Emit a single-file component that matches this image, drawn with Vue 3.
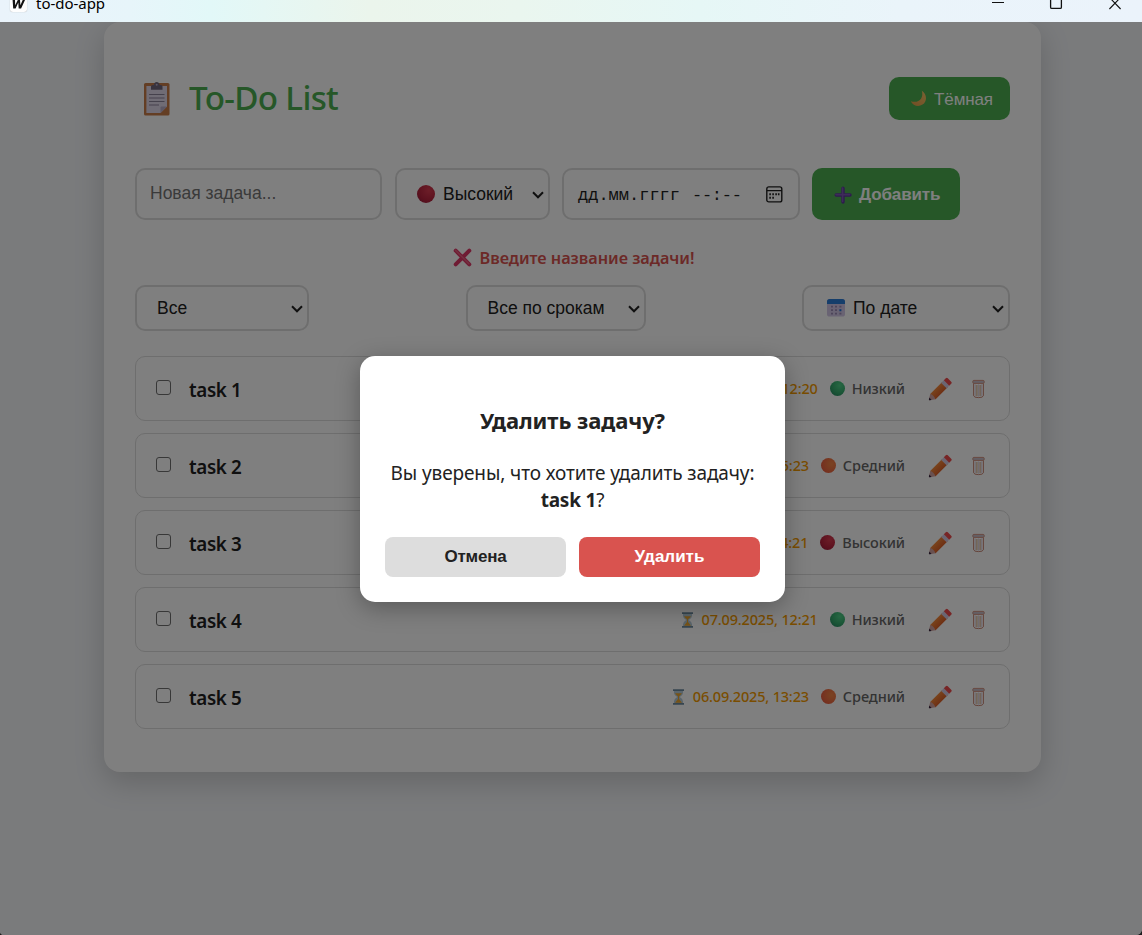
<script setup>
const tasks = [
  { id: 1, name: 'task 1', due: '07.09.2025, 12:20', level: 'low', label: 'Низкий' },
  { id: 2, name: 'task 2', due: '06.09.2025, 15:23', level: 'mid', label: 'Средний' },
  { id: 3, name: 'task 3', due: '05.09.2025, 14:21', level: 'high', label: 'Высокий' },
  { id: 4, name: 'task 4', due: '07.09.2025, 12:21', level: 'low', label: 'Низкий' },
  { id: 5, name: 'task 5', due: '06.09.2025, 13:23', level: 'mid', label: 'Средний' },
]
</script>

<template>
  <div class="window">
    <header class="titlebar">
      <span class="logo">
        <svg width="17" height="12" viewBox="0 0 17 12">
          <path d="M2.6 0 L3.2 8.5 L5.6 8.5 L8.3 2.4 L8.7 8.5 L11.1 8.5 L15 0 L12.7 0 L10.4 5.2 L10 0 L7.8 0 L5.2 5.2 L5 0 Z" fill="#111" />
        </svg>
      </span>
      <span class="app-name">to-do-app</span>
      <span class="controls">
        <svg width="160" height="22" viewBox="0 0 160 22" fill="none" stroke="#111" stroke-width="1.3">
          <path d="M10 2.5H22" stroke-width="1" />
          <path d="M68.6 -4V7.2Q68.6 8.4 69.8 8.4H78.2Q79.4 8.4 79.4 7.2V-4" />
          <path d="M127 -3L138.6 9M139 -3L127.4 9" stroke-width="1.1" />
        </svg>
      </span>
    </header>

    <main class="stage">
      <section class="card">
        <div class="head">
          <div class="brand">
            <svg class="clip" width="28" height="36" viewBox="0 0 28 36">
              <rect x="1" y="2" width="25.5" height="32.5" rx="1.6" fill="#c97d48" />
              <path d="M3.4 5H24V25.5L17.5 32H3.4Z" fill="#e0d9ea" />
              <path d="M17.5 32V26.5Q17.5 25.5 18.5 25.5H24Z" fill="#b9aec9" />
              <path d="M8 8.8V5.5Q8 4 9.5 4H10.7Q11.3 1 13.7 1T16.8 4H18Q19.5 4 19.5 5.5V8.8Z" fill="#71667c" />
              <circle cx="13.7" cy="3.7" r="1" fill="#b9aec9" />
              <path d="M6 13.5H21.5M6 17H21.5M6 20.5H21.5M6 24H16" stroke="#8b8299" stroke-width="1.2" />
            </svg>
            <h1>To-Do List</h1>
          </div>
          <button class="theme">
            <svg width="17" height="17" viewBox="0 0 17 17">
              <defs>
                <linearGradient id="moon" x1="1" y1="0" x2="0" y2="1">
                  <stop offset="0" stop-color="#f6c566" /><stop offset="1" stop-color="#e69b48" />
                </linearGradient>
              </defs>
              <path d="M11.8 .8C17 4 17.5 11.5 12.5 14.6C8.5 17.2 3 16 .8 11.2C5 12.6 9 11.8 11 8.8C12.5 6.5 12.6 3.5 11.8 .8Z" fill="url(#moon)" />
            </svg>
            <span>Тёмная</span>
          </button>
        </div>

        <div class="form">
          <div class="field text"><span>Новая задача...</span></div>
          <div class="field priority">
            <span class="ball high big"></span>
            <span class="value">Высокий</span>
            <svg class="chev" width="12" height="8" viewBox="0 0 12 8"><path d="M1 1.3L6 6.3L11 1.3" /></svg>
          </div>
          <div class="field date">
            <span class="mono">дд.мм.гггг</span><span class="mono time">--:--</span>
            <svg class="picker" width="17" height="17" viewBox="0 0 17 17">
              <rect x=".8" y=".9" width="15" height="15" rx="2" fill="none" stroke="#202020" stroke-width="1.4" />
              <path d="M1 4.7H16" stroke="#202020" stroke-width="1.2" />
              <path d="M6.6 8h1.6M9.6 8h1.6M12.2 8h1.6M3.6 11.5h1.6M6.6 11.5h1.6M3.6 8h1.6" stroke="#202020" stroke-width="2" transform="translate(-.3 .2)" />
            </svg>
          </div>
          <button class="add">
            <svg width="18" height="18" viewBox="0 0 18 18">
              <path d="M9 2.2V16M2.2 9H16" stroke="#5a3698" stroke-width="3.4" stroke-linecap="round" />
              <path d="M8.6 2V15.5M2 8.6H15.6" stroke="#7c57b5" stroke-width="1.6" stroke-linecap="round" />
            </svg>
            <span>Добавить</span>
          </button>
        </div>

        <div class="error">
          <svg width="19" height="19" viewBox="0 0 19 19">
            <path d="M2.7 2.7L16.3 16.3M16.3 2.7L2.7 16.3" stroke="#df3868" stroke-width="4" stroke-linecap="round" />
            <path d="M2.5 2.3L15.9 15.7" stroke="#e96383" stroke-width="1.4" stroke-linecap="round" />
          </svg>
          <span>Введите название задачи!</span>
        </div>

        <div class="filters">
          <div class="field f-state"><span class="value">Все</span>
            <svg class="chev" width="12" height="8" viewBox="0 0 12 8"><path d="M1 1.3L6 6.3L11 1.3" /></svg>
          </div>
          <div class="field f-due"><span class="value">Все по срокам</span>
            <svg class="chev" width="12" height="8" viewBox="0 0 12 8"><path d="M1 1.3L6 6.3L11 1.3" /></svg>
          </div>
          <div class="field f-sort">
            <svg class="cal" width="18" height="18" viewBox="0 0 18 18">
              <rect width="18" height="17.5" rx="2.6" fill="#d3c6e6" />
              <path d="M0 5V2.6Q0 0 2.6 0H15.4Q18 0 18 2.6V5Z" fill="#2a7cd6" />
              <path d="M4 7.7h2M8 7.7h2M12.4 7.7h2M4 11.2h2M8 11.2h2M4 14.6h2M8 14.6h2M12.4 14.6h2" stroke="#9a8bb5" stroke-width="1.8" />
              <path d="M12.4 11.2h2" stroke="#1d72d8" stroke-width="2" />
            </svg>
            <span class="value">По дате</span>
            <svg class="chev" width="12" height="8" viewBox="0 0 12 8"><path d="M1 1.3L6 6.3L11 1.3" /></svg>
          </div>
        </div>

        <ul class="tasks">
          <li v-for="t in tasks" :key="t.id" class="task">
            <span class="check"></span>
            <span class="name">{{ t.name }}</span>
            <span class="due">
              <svg width="13" height="16" viewBox="0 0 13 16">
                <path d="M2 1.5V4Q2 6 5.2 8Q2 10 2 12.2V14.5H11V12.2Q11 10 7.8 8Q11 6 11 4V1.5Z" fill="#b5cbd8" />
                <path d="M3 4.2H10Q9 6 6.5 7.8Q4 6 3 4.2ZM6.5 9.2L10 13.8H3Z" fill="#eda72f" />
                <path d="M6.5 7V12" stroke="#eda72f" />
                <path d="M1 1.2H12M1 14.8H12" stroke="#6d8b9e" stroke-width="1.7" />
              </svg>
              <span>{{ t.due }}</span>
            </span>
            <span class="level"><i class="ball" :class="t.level"></i><span>{{ t.label }}</span></span>
            <svg class="pencil" width="24" height="24" viewBox="0 0 24 24">
              <defs>
                <linearGradient id="wood" x1="0" y1="0" x2="1" y2="1">
                  <stop offset=".3" stop-color="#f58d3c" /><stop offset=".75" stop-color="#d65322" />
                </linearGradient>
              </defs>
              <path d="M2.2 16.9L14.2 4.9L19.6 10.3L7.6 22.3Q4.5 21.5 2.2 16.9Z" fill="url(#wood)" />
              <path d="M2.2 16.9Q5.5 17.6 7.6 22.3L1.6 23.3Q.7 23.4 .9 22.6Z" fill="#d3a3a0" />
              <path d="M1.4 20.6L3.5 22.9L1.6 23.3Q.7 23.4 .9 22.6Z" fill="#35243f" />
              <path d="M13.2 5.9L15.8 3.3L21.2 8.7L18.6 11.3Z" fill="#d5cbe4" />
              <path d="M15.8 3.3L17.8 1.3Q18.8 .3 19.8 1.3L23.2 4.7Q24.2 5.7 23.2 6.7L21.2 8.7Z" fill="#ee4b4c" />
            </svg>
            <svg class="bin" width="13" height="20" viewBox="0 0 13 20" fill="none">
              <path d="M1.6 4.5V16.8Q2 18.6 6.5 18.6T11.4 16.8V4.5" stroke="#c98573" stroke-width="1" />
              <path d="M3.3 5.5V17M6.5 5.5V17.6M9.7 5.5V17" stroke="#e0d6e4" stroke-width="1" />
              <path d="M4.9 6V17M8.1 6V17" stroke="#c7905c" stroke-width=".8" />
              <rect x=".8" y="1.4" width="11.4" height="3" rx="1" fill="#c9bfc9" stroke="#cf8a76" stroke-width=".9" />
            </svg>
          </li>
        </ul>
      </section>

      <div class="overlay">
        <div class="modal">
          <h2>Удалить задачу?</h2>
          <p>Вы уверены, что хотите удалить задачу:<br /><b>task 1</b>?</p>
          <div class="actions">
            <button class="cancel">Отмена</button>
            <button class="remove">Удалить</button>
          </div>
        </div>
      </div>
    </main>
  </div>
</template>

<style>
html, body { margin: 0; overflow: hidden; background: #1c1c1c; }
</style>

<style scoped>
* { box-sizing: border-box; }
.window { width: 1142px; height: 935px; overflow: hidden; font-family: "Noto Sans", "Open Sans", sans-serif; color: #222; }
.titlebar { height: 22px; display: flex; align-items: flex-start; background: linear-gradient(90deg, #eaf3fb 0, #e7f5fa 130px, #e2f8f8 210px, #ebf5ec 370px, #eaf6ef 520px, #e6f7f6 700px, #eaf4fa 900px, #ebf3fb 100%); }
.logo { width: 17px; height: 12px; margin-left: 10px; background: #fdfdfd; border-radius: 0 0 3px 3px; box-shadow: 0 0 1px #999; }
.logo svg { display: block; }
.app-name { margin: -7px 0 0 9px; font-size: 15px; line-height: 20px; letter-spacing: -.03px; color: #000; }
.controls { margin-left: auto; width: 160px; height: 22px; }
.controls svg { display: block; }

.stage { position: relative; height: 913px; padding-left: 104px; background: #f4f6f9; border-radius: 0 0 6px 4px; overflow: hidden; }
.card { width: 937px; height: 750px; padding: 55px 31px 0; background: #fff; border-radius: 16px; box-shadow: 0 10px 30px rgba(0, 0, 0, .18); }
.head { display: flex; justify-content: space-between; align-items: center; height: 43px; }
.brand { display: flex; align-items: center; }
.clip { margin-left: 8px; margin-right: 18px; }
h1 { margin: 0 0 2px; font-size: 33.2px; line-height: 40px; font-weight: 500; letter-spacing: -.68px; color: #4caf50; }
button { border: 0; font-family: "Liberation Sans", Arial, sans-serif; color: #fff; padding: 0; }
.theme { display: flex; align-items: center; width: 121px; height: 43px; padding: 0 0 0 21px; border-radius: 10px; background: #4caf50; font-size: 17px; letter-spacing: -.1px; }
.theme svg { margin-right: 7px; }
.theme span { padding-top: 2px; }

.form { display: flex; margin-top: 48px; height: 52px; }
.field { position: relative; display: flex; align-items: center; border: 2px solid #ddd; border-radius: 10px; background: #fff; font-family: "Liberation Sans", Arial, sans-serif; font-size: 17.5px; color: #202020; white-space: nowrap; }
.text { width: 247px; padding: 0 0 2px 13px; margin-right: 13px; color: #757575; }
.priority { width: 155px; padding-left: 20px; margin-right: 12px; }
.priority .ball { margin-right: 8px; }
.chev { margin: 0 4px 0 auto; fill: none; stroke: #202020; stroke-width: 2; position: relative; top: 1px; }
.date { width: 238px; padding-left: 14px; margin-right: 12px; }
.mono { font-family: "Liberation Mono", monospace; font-size: 17px; padding-top: 3px; }
.time { margin-left: 12px; letter-spacing: -.3px; }
.picker { margin: 0 15px 0 auto; }
.add { display: flex; align-items: center; width: 148px; height: 52px; padding: 1px 0 0 22px; border-radius: 10px; background: #4caf50; font-size: 17px; font-weight: 700; letter-spacing: -.12px; }
.add svg { margin-right: 7px; }

.error { display: flex; align-items: center; justify-content: center; height: 22px; margin: 27px 0 16px; padding-left: 2px; font-size: 16.3px; font-weight: 600; line-height: 22px; letter-spacing: -.04px; color: #d9534f; }
.error svg { margin-right: 8px; margin-top: -1px; }
.error span { margin-top: -1px; }

.filters { display: flex; justify-content: space-between; height: 46px; }
.f-state { width: 174px; padding-left: 20px; }
.f-due { width: 180px; padding-left: 20px; }
.f-sort { width: 208px; padding-left: 23px; }
.f-sort .cal { margin-right: 8px; }

.tasks { list-style: none; margin: 25px 0 0; padding: 0; display: flex; flex-direction: column; gap: 12px; }
.task { display: flex; align-items: center; height: 65px; padding: 0 24px 0 20px; border: 1px solid #dcdcdc; border-radius: 10px; }
.check { width: 15px; height: 15px; margin: -3px 18px 0 0; border: 1.2px solid #707070; border-radius: 3px; }
.name { padding-top: 2.5px; font-size: 18.8px; font-weight: 600; letter-spacing: -.35px; color: #202020; }
.due { display: flex; align-items: center; margin-left: auto; font-size: 14.5px; font-weight: 500; letter-spacing: -.18px; color: #f59b00; }
.due svg { margin-right: 8px; }
.due span { margin-top: -2px; }
.level span { margin-top: -1px; }
.level { display: flex; align-items: center; margin-left: 12px; font-size: 14.5px; font-weight: 500; letter-spacing: -.08px; color: #666; }
.level .ball { margin-right: 7px; }
.ball { flex: none; width: 15px; height: 15px; border-radius: 50%; }
.big { width: 18px; height: 18px; }
.low { background: radial-gradient(circle at 65% 30%, #4fd087, #34a96c 55%, #207a5e); }
.mid { background: radial-gradient(circle at 70% 40%, #f48745, #ec6440 65%, #d34a3d); }
.high { background: radial-gradient(circle at 65% 30%, #d93b50, #b7233d 60%, #861a3d); }
.pencil { margin-left: 23px; }
.bin { margin-left: 20px; }

.overlay { position: absolute; inset: 0; padding-left: 3px; display: flex; align-items: center; justify-content: center; background: rgba(0, 0, 0, .5); }
.modal { width: 425px; height: 246px; padding: 49px 25px 0; background: #fff; border-radius: 15px; box-shadow: 0 6px 25px rgba(0, 0, 0, .3); text-align: center; margin-top: 1px; }
h2 { margin: 0; font-size: 22px; line-height: 30px; font-weight: 700; letter-spacing: -.08px; }
p { margin: 25px -10px 0; font-size: 19px; line-height: 27px; letter-spacing: -.1px; }
p b { letter-spacing: -.2px; }
.actions { display: flex; gap: 13px; margin-top: 23px; }
.actions button { flex: 1; height: 40px; padding-bottom: 0; border-radius: 8px; font-size: 17px; font-weight: 700; }
.actions .cancel { background: #ddd; color: #222; letter-spacing: -.2px; }
.actions .remove { background: #d9534f; color: #fff; }
</style>
